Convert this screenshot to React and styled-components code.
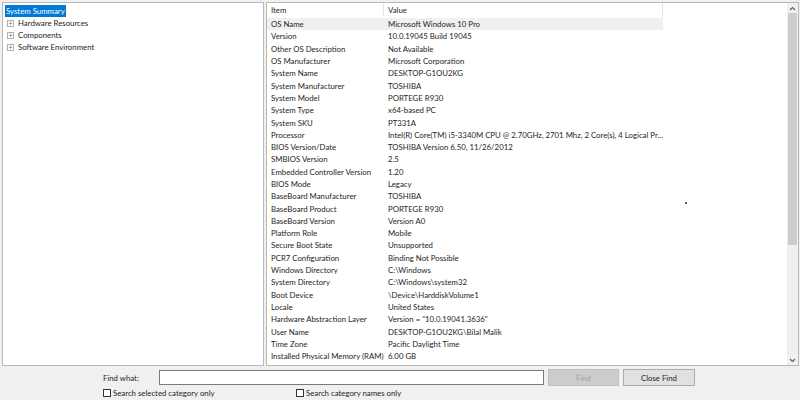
import styled, { createGlobalStyle } from "styled-components";

const GlobalStyle = createGlobalStyle`
  html, body {
    margin: 0;
    padding: 0;
    background: #f0f0f0;
  }
  body {
    font-family: Lato, "Noto Sans", sans-serif;
    font-size: 7.8px;
    color: #1e1e1e;
  }
`;

const summary = [
  ["OS Name", "Microsoft Windows 10 Pro"],
  ["Version", "10.0.19045 Build 19045"],
  ["Other OS Description", "Not Available"],
  ["OS Manufacturer", "Microsoft Corporation"],
  ["System Name", "DESKTOP-G1OU2KG"],
  ["System Manufacturer", "TOSHIBA"],
  ["System Model", "PORTEGE R930"],
  ["System Type", "x64-based PC"],
  ["System SKU", "PT331A"],
  ["Processor", "Intel(R) Core(TM) i5-3340M CPU @ 2.70GHz, 2701 Mhz, 2 Core(s), 4 Logical Pr..."],
  ["BIOS Version/Date", "TOSHIBA Version 6.50, 11/26/2012"],
  ["SMBIOS Version", "2.5"],
  ["Embedded Controller Version", "1.20"],
  ["BIOS Mode", "Legacy"],
  ["BaseBoard Manufacturer", "TOSHIBA"],
  ["BaseBoard Product", "PORTEGE R930"],
  ["BaseBoard Version", "Version A0"],
  ["Platform Role", "Mobile"],
  ["Secure Boot State", "Unsupported"],
  ["PCR7 Configuration", "Binding Not Possible"],
  ["Windows Directory", "C:\\Windows"],
  ["System Directory", "C:\\Windows\\system32"],
  ["Boot Device", "\\Device\\HarddiskVolume1"],
  ["Locale", "United States"],
  ["Hardware Abstraction Layer", 'Version = "10.0.19041.3636"'],
  ["User Name", "DESKTOP-G1OU2KG\\Bilal Malik"],
  ["Time Zone", "Pacific Daylight Time"],
  ["Installed Physical Memory (RAM)", "6.00 GB"],
];

const Window = styled.div`
  width: 800px;
  height: 400px;
  display: flex;
  flex-direction: column;
  overflow: hidden;
`;

const Panes = styled.div`
  display: flex;
  gap: 2px;
  padding: 2px 1px 0 2px;
  height: 366px;
  box-sizing: border-box;
`;

const TreePane = styled.div`
  width: 262px;
  background: #fff;
  border: 1px solid #b9b9b9;
  box-sizing: border-box;
  padding: 2px 0 0 2px;
`;

const TreeNode = styled.div`
  display: flex;
  align-items: center;
  height: 12px;
  padding-left: ${(p) => (p.$child ? 2 : 0)}px;
  gap: 3px;
  white-space: nowrap;
`;

const TreeLabel = styled.span`
  padding: 0 1px;
  line-height: 12px;
  background: ${(p) => (p.$selected ? "#0078d7" : "transparent")};
  color: ${(p) => (p.$selected ? "#fff" : "#1e1e1e")};
`;

const Expander = styled.span`
  width: 7px;
  height: 7px;
  display: inline-flex;
  align-items: center;
  justify-content: center;
  border: 1px solid #b0b0b0;
  box-sizing: border-box;
  font-size: 7px;
  line-height: 5px;
  color: #666;
`;

const DetailPane = styled.div`
  flex: 1;
  display: flex;
  background: #fff;
  border: 1px solid #b9b9b9;
  box-sizing: border-box;
  position: relative;
`;

const Table = styled.div`
  width: 396px;
  display: flex;
  flex-direction: column;
`;

const HeaderRow = styled.div`
  display: grid;
  grid-template-columns: 117px 1fr;
  height: 14px;
  align-items: center;
  border-right: 1px solid #e5e5e5;
  border-bottom: 1px solid #fff;
`;

const HeaderCell = styled.div`
  padding-left: 4px;
  height: 100%;
  display: flex;
  align-items: center;
  border-right: ${(p) => (p.$first ? "1px solid #e5e5e5" : "none")};
`;

const Row = styled.div`
  display: grid;
  grid-template-columns: 117px 1fr;
  height: 12.3px;
  align-items: center;
  background: ${(p) => (p.$active ? "#f0f0f0" : "transparent")};
  white-space: nowrap;
`;

const Cell = styled.div`
  padding-left: 4px;
  overflow: ${(p) => (p.$value ? "visible" : "hidden")};
`;

const Spacer = styled.div`
  flex: 1;
`;

const ScrollBar = styled.div`
  width: 11px;
  background: #f0f0f0;
  display: flex;
  flex-direction: column;
  align-items: center;
`;

const Arrow = styled.div`
  height: 10px;
  display: flex;
  align-items: center;
  justify-content: center;
`;

const Thumb = styled.div`
  width: 9px;
  height: 232px;
  background: #cdcdcd;
`;

const Dot = styled.span`
  position: absolute;
  left: 418px;
  top: 199px;
  width: 2px;
  height: 2px;
  background: #9b3c5a;
`;

const FindBar = styled.div`
  flex: 1;
  display: grid;
  grid-template-columns: 52px 385px 71px 72px;
  grid-template-rows: 17px 14px;
  column-gap: 4px;
  padding: 3px 0 0 103px;
  align-items: center;
`;

const FindInput = styled.div`
  height: 15px;
  background: #fff;
  border: 1px solid #7a7a7a;
  box-sizing: border-box;
`;

const Button = styled.div`
  height: 17px;
  display: flex;
  align-items: center;
  justify-content: center;
  box-sizing: border-box;
  background: ${(p) => (p.$disabled ? "#cccccc" : "#e1e1e1")};
  border: 1px solid ${(p) => (p.$disabled ? "#bfbfbf" : "#adadad")};
  color: ${(p) => (p.$disabled ? "#a0a0a0" : "#1e1e1e")};
`;

const Checks = styled.div`
  grid-column: 1 / -1;
  display: flex;
  align-items: center;
`;

const Check = styled.label`
  display: flex;
  align-items: center;
  gap: 2px;
  width: ${(p) => p.$w}px;
`;

const Box = styled.span`
  width: 8px;
  height: 8px;
  border: 1px solid #333;
  box-sizing: border-box;
  background: #fff;
`;

function Chevron({ up }) {
  return (
    <svg width="7" height="5" viewBox="0 0 7 5">
      <path
        d={up ? "M1 4 L3.5 1.5 L6 4" : "M1 1 L3.5 3.5 L6 1"}
        fill="none"
        stroke="#606060"
        strokeWidth="1.2"
      />
    </svg>
  );
}

export default function App() {
  return (
    <Window>
      <GlobalStyle />
      <Panes>
        <TreePane>
          <TreeNode>
            <TreeLabel $selected>System Summary</TreeLabel>
          </TreeNode>
          {["Hardware Resources", "Components", "Software Environment"].map((n) => (
            <TreeNode key={n} $child>
              <Expander>+</Expander>
              <TreeLabel>{n}</TreeLabel>
            </TreeNode>
          ))}
        </TreePane>
        <DetailPane>
          <Table>
            <HeaderRow>
              <HeaderCell $first>Item</HeaderCell>
              <HeaderCell>Value</HeaderCell>
            </HeaderRow>
            {summary.map(([k, v], i) => (
              <Row key={k} $active={i === 0}>
                <Cell>{k}</Cell>
                <Cell $value>{v}</Cell>
              </Row>
            ))}
          </Table>
          <Spacer />
          <ScrollBar>
            <Arrow>
              <Chevron up />
            </Arrow>
            <Thumb />
            <Spacer />
            <Arrow>
              <Chevron />
            </Arrow>
          </ScrollBar>
          <Dot />
        </DetailPane>
      </Panes>
      <FindBar>
        <span>Find what:</span>
        <FindInput />
        <Button $disabled>Find</Button>
        <Button>Close Find</Button>
        <Checks>
          <Check $w={193}>
            <Box />
            Search selected category only
          </Check>
          <Check $w={200}>
            <Box />
            Search category names only
          </Check>
        </Checks>
      </FindBar>
    </Window>
  );
}
